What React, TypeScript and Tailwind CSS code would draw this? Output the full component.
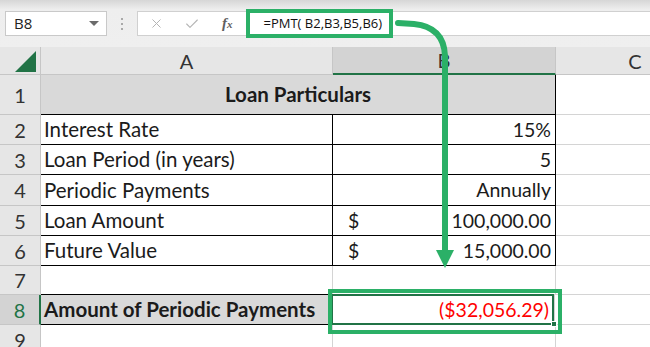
import { Check, X } from "lucide-react";

const GRID = "border-[#d4d4d4]";

export default function App() {
  return (
    <div className="relative w-[650px] h-[347px] overflow-hidden bg-white [font-family:Lato,sans-serif] text-[#1b1b1b]">
      {/* toolbar / formula bar */}
      <div className="h-[47px] bg-gradient-to-b from-[#d6d6d6] via-[#eeeeee] via-[20%] to-[#efefef] pt-[11px]">
        <div className="flex h-[25px] items-stretch">
          {/* name box */}
          <div className="ml-[5px] w-[102px] bg-white border border-[#c9c9c9] flex items-center justify-between pl-[8px] pr-[7px]">
            <span className="text-[15px] [font-family:'Open_Sans',sans-serif] text-[#222]">B8</span>
            <svg width="10" height="6" viewBox="0 0 10 6">
              <path d="M0 0 L10 0 L5 5 Z" fill="#6b6b6b" />
            </svg>
          </div>
          {/* dots */}
          <div className="w-[30px] flex flex-col items-center justify-center gap-[3px]">
            <span className="w-[2px] h-[2px] bg-[#a9a9a9]" />
            <span className="w-[2px] h-[2px] bg-[#a9a9a9]" />
            <span className="w-[2px] h-[2px] bg-[#a9a9a9]" />
          </div>
          {/* formula area */}
          <div className="flex-1 bg-white border-y border-l border-[#d0d0d0] flex items-center">
            <X className="ml-[11px] w-[15px] h-[15px] text-[#b4b4b4]" strokeWidth={1.6} />
            <Check className="ml-[20px] w-[16px] h-[16px] text-[#b4b4b4]" strokeWidth={1.6} />
            <span className="ml-[22px] text-[15px] italic font-semibold [font-family:'Liberation_Serif',serif] text-[#606060]">
              f<span className="text-[11px]">x</span>
            </span>
            <span className="ml-[31px] text-[13px] [font-family:'Open_Sans',sans-serif] text-[#111]">
              =PMT( B2,B3,B5,B6)
            </span>
          </div>
        </div>
      </div>

      {/* column headers */}
      <div className="flex h-[28px] text-[20px] text-[#333]">
        <div className="w-[41px] shrink-0 bg-[#e6e6e6] border-r border-b border-[#c6c6c6] relative">
          <svg className="absolute left-[15px] top-[4px]" width="21" height="21" viewBox="0 0 21 21">
            <path d="M21 0 L21 21 L0 21 Z" fill="#217346" />
          </svg>
        </div>
        <div className="w-[292px] shrink-0 bg-[#e6e6e6] border-r border-b border-[#c6c6c6] flex items-center justify-center">
          A
        </div>
        <div className="w-[223px] shrink-0 bg-[#d3d3d3] border-r border-[#c6c6c6] border-b-2 border-b-[#217346] flex items-center justify-center">
          B
        </div>
        <div className="flex-1 bg-[#e6e6e6] border-b border-[#c6c6c6] flex items-center justify-center pl-[64px]">
          C
        </div>
      </div>

      {/* row 1 */}
      <div className="flex h-[40px] text-[20.5px]">
        <RowHead n={1} />
        <div className="w-[515px] shrink-0 bg-[#d9d9d9] border-r border-b border-black flex items-center justify-center font-bold">
          Loan Particulars
        </div>
        <div className={`flex-1 border-b ${GRID}`} />
      </div>

      <DataRow n={2} h="h-[30px]" label="Interest Rate" value="15%" />
      <DataRow n={3} h="h-[30px]" label="Loan Period (in years)" value="5" />
      <DataRow n={4} h="h-[31px]" label="Periodic Payments" value="Annually" />
      <DataRow n={5} h="h-[30px]" label="Loan Amount" value="100,000.00" dollar />
      <DataRow n={6} h="h-[30px]" label="Future Value" value="15,000.00" dollar />

      {/* row 7 */}
      <div className="flex h-[29px] text-[20.5px]">
        <RowHead n={7} />
        <div className="w-[292px] shrink-0 border-r border-b border-r-[#d4d4d4] border-b-black" />
        <div className="w-[223px] shrink-0 border-r border-b border-r-[#d4d4d4] border-b-[#d4d4d4]" />
        <div className={`flex-1 border-b ${GRID}`} />
      </div>

      {/* row 8 */}
      <div className="flex h-[30px] text-[20.5px]">
        <div className="w-[41px] shrink-0 bg-[#d3d3d3] border-r-2 border-r-[#217346] border-b border-[#c6c6c6] flex items-center justify-center text-[20px] text-[#217346]">
          8
        </div>
        <div className="w-[291px] shrink-0 bg-[#d9d9d9] border-r border-b border-black flex items-center pl-[3px] font-bold whitespace-nowrap">
          Amount of Periodic Payments
        </div>
        <div className="w-[223px] shrink-0 border-r border-b border-r-[#d4d4d4] border-b-black relative flex items-center justify-end pr-[5px] text-[19.5px] text-[#ff0000]">
          ($32,056.29)
          <div className="absolute -left-[1px] -top-[1px] right-[0px] bottom-[-1px] border-2 border-[#217346]" />
          <div className="absolute right-[-3px] bottom-[-3px] w-[6px] h-[6px] bg-[#217346] border border-white" />
        </div>
        <div className={`flex-1 border-b ${GRID}`} />
      </div>

      {/* row 9 */}
      <div className="flex h-[30px] text-[20.5px]">
        <RowHead n={9} />
        <div className="w-[292px] shrink-0 border-r border-[#d4d4d4]" />
        <div className="w-[223px] shrink-0 border-r border-[#d4d4d4]" />
        <div className="flex-1" />
      </div>

      {/* annotation: formula highlight */}
      <div className="absolute left-[246px] top-[9px] w-[147px] h-[29px] border-4 border-[#2bb067]" />
      {/* annotation: result highlight */}
      <div className="absolute left-[328px] top-[289px] w-[234px] h-[45px] border-4 border-[#2bb067]" />

      {/* annotation arrow */}
      <svg className="absolute left-0 top-0" width="650" height="347" viewBox="0 0 650 347">
        <path
          d="M398 23 L414 24 Q444 27 445 56 L445 252"
          fill="none"
          stroke="#2bb067"
          strokeWidth="6"
          strokeLinecap="round"
        />
        <path d="M436 250 L454 250 L445 268 Z" fill="#2bb067" />
      </svg>
    </div>
  );
}

function RowHead({ n }: { n: number }) {
  return (
    <div className="w-[41px] shrink-0 bg-[#e6e6e6] border-r border-b border-[#c6c6c6] flex items-center justify-center text-[20px] text-[#333]">
      {n}
    </div>
  );
}

function DataRow({
  n,
  h,
  label,
  value,
  dollar,
}: {
  n: number;
  h: string;
  label: string;
  value: string;
  dollar?: boolean;
}) {
  return (
    <div className={`flex ${h} text-[20.5px]`}>
      <RowHead n={n} />
      <div className="w-[292px] shrink-0 border-r border-b border-black flex items-center pl-[3px] whitespace-nowrap">
        {label}
      </div>
      <div className="w-[223px] shrink-0 border-r border-b border-black flex items-center justify-between pl-[15px] pr-[4px] text-[19.5px]">
        <span>{dollar ? "$" : ""}</span>
        <span>{value}</span>
      </div>
      <div className={`flex-1 border-b ${GRID}`} />
    </div>
  );
}
